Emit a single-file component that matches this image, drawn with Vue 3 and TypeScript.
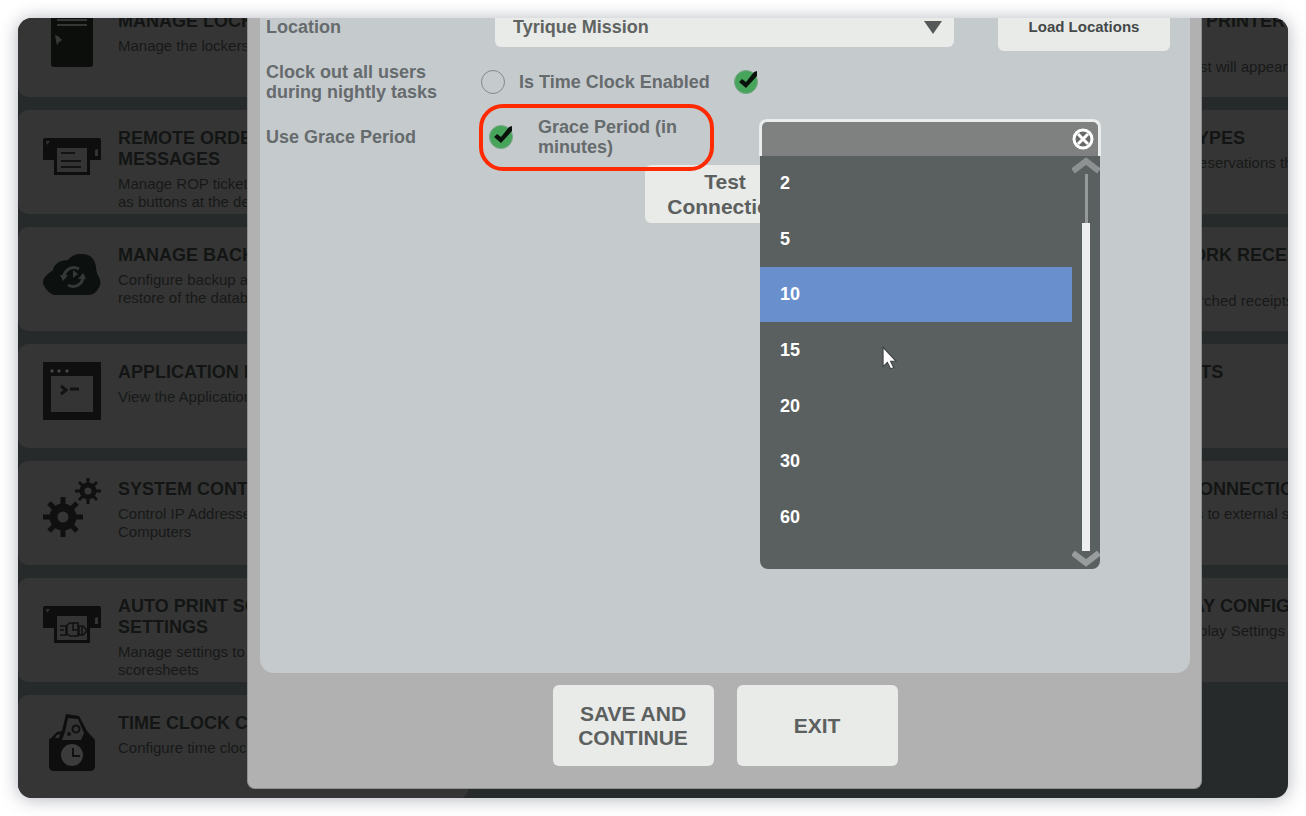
<script setup lang="ts">
import { ref } from 'vue'

type IconName = 'locker' | 'printer' | 'cloud' | 'terminal' | 'gears' | 'scores' | 'clock'

interface Tile {
  title: string
  text: string
  icon?: IconName
}

const leftTiles: Tile[] = [
  { title: 'MANAGE LOCKERS', text: 'Manage the lockers', icon: 'locker' },
  { title: 'REMOTE ORDER\nMESSAGES', text: 'Manage ROP tickets that appear\nas buttons at the desk', icon: 'printer' },
  { title: 'MANAGE BACKUPS', text: 'Configure backup and\nrestore of the database', icon: 'cloud' },
  { title: 'APPLICATION LOGS', text: 'View the Application logs', icon: 'terminal' },
  { title: 'SYSTEM CONTROL', text: 'Control IP Addresses of\nComputers', icon: 'gears' },
  { title: 'AUTO PRINT SCORES\nSETTINGS', text: 'Manage settings to print\nscoresheets', icon: 'scores' },
  { title: 'TIME CLOCK CONFIG', text: 'Configure time clock', icon: 'clock' },
]

const rightTiles: Tile[] = [
  { title: 'REMOTE ORDER PRINTER\nMESSAGES', text: 'Configure where the list will appear' },
  { title: 'RESERVATION TYPES', text: 'Manage the types of reservations that' },
  { title: 'MANAGE NETWORK RECEIPTS\nPRINTING', text: 'Manage and print searched receipts' },
  { title: 'MANAGE LAYOUTS', text: 'Manage layouts' },
  { title: 'RESERVATION CONNECTIONS', text: 'Configure connections to external systems' },
  { title: 'KITCHEN DISPLAY CONFIG', text: 'Configure Kitchen Display Settings' },
]

const locations = ['Tyrique Mission']
const location = ref(locations[0])
const clockOutNightly = ref(false)
const timeClockEnabled = ref(true)
const useGrace = ref(true)
const search = ref('')
const minutes = [2, 5, 10, 15, 20, 30, 60]
const selected = ref(10)
</script>

<template>
  <div class="screen">
    <main class="board">
      <section class="column first">
        <article v-for="tile in leftTiles" :key="tile.title" class="tile">
          <svg class="icon" viewBox="0 0 60 60" aria-hidden="true">
            <g v-if="tile.icon === 'locker'">
              <rect x="9" y="-4" width="42" height="61" rx="3" fill="#0c0e0c" />
              <path d="M15 0h30M15 5h30M15 10h30M15 15h30" stroke="#353635" stroke-width="2" />
              <path d="M13 25l3 1 4 4-4 3-1 3z" fill="#353635" />
            </g>
            <g v-else-if="tile.icon === 'printer' || tile.icon === 'scores'">
              <path d="M3 11h54q2 0 2 2v20H48v15H12V33H1V13q0-2 2-2z" fill="#0e0e0e" />
              <path d="M15 21h30v24H15z" fill="#343434" />
              <path d="M53 23l3-1v7h-3z" fill="#343434" />
              <path d="M4 14h4l-3 4z" fill="#343434" />
              <path v-if="tile.icon === 'printer'" d="M19 26h14M19 34h20M19 40h20" stroke="#131313" stroke-width="2" />
              <g v-else fill="none" stroke="#101010" stroke-width="1.500">
                <path d="M18 31h6v9h-6M18 35h4M25 30l3-2h8v13h-8l-3-2zM31 28v7h4M37 31h4l3 3v3l-3 3h-4zM40 31v9" />
              </g>
            </g>
            <g v-else-if="tile.icon === 'cloud'">
              <path d="M12 51C6 49 1 42 1 38c0-5 6-9 10-12 1-6 7-10 15-10 3-4 8-6 12-6 10-1 15 5 16 13 0 4 1 7 3 10 1 3 2 5 1 8-2 6-6 10-12 10z" fill="#0c100e" />
              <path d="M22 35a10 10 0 0 1 15-10M41 31a10 10 0 0 1-15 10" fill="none" stroke="#353836" stroke-width="3" />
              <path d="M18 31h8l-5 6zM36 35h8l-3-6zM31 26v8l5-4" fill="#353836" />
            </g>
            <g v-else-if="tile.icon === 'terminal'">
              <rect x="1" y="1" width="58" height="58" fill="#0e0f0e" />
              <rect x="9" y="15" width="42" height="36" fill="#343434" />
              <path d="M8 10l2-2 2 2-2 2zM15 10l2-2 2 2-2 2zM23 10l2-2 2 2-2 2z" fill="#484948" />
              <path d="M19 25l5 4-5 4M28 28h9" fill="none" stroke="#121212" stroke-width="3" />
            </g>
            <g v-else-if="tile.icon === 'gears'" fill="none" stroke="#0f100f">
              <circle cx="21" cy="39" r="9.500" stroke-width="8" />
              <path d="M21 19v9M21 50v9M1 39h9M32 39h9M7 25l7 7M28 46l7 7M35 25l-7 7M14 46l-7 7" stroke-width="5" />
              <circle cx="46" cy="13" r="6" stroke-width="5" />
              <path d="M46 0v6M46 20v6M33 13h6M53 13h6M37 4l5 5M50 17l5 5M55 4l-5 5M42 17l-5 5" stroke-width="3" />
            </g>
            <g v-else>
              <path d="M9 26l6-6 5-1 4-17 13 2 8 15 8 9v26q0 5-5 5H12q-5 0-5-5V27z" fill="#0d0e0d" />
              <path d="M26 6l10 1 6 14-3 7H20l3-8z" fill="#343434" />
              <circle cx="34" cy="17" r="3.500" fill="none" stroke="#101110" stroke-width="2" />
              <circle cx="27" cy="22" r="2" fill="#101110" />
              <path d="M15 23l3-1-1 4h-4z" fill="#343434" />
              <circle cx="30" cy="43" r="11" fill="#3a3b3a" />
              <path d="M31 36v8h7" fill="none" stroke="#111" stroke-width="2" />
            </g>
          </svg>
          <div class="copy">
            <h2>{{ tile.title }}</h2>
            <p>{{ tile.text }}</p>
          </div>
        </article>
      </section>
      <section class="column last">
        <article v-for="tile in rightTiles" :key="tile.title" class="tile">
          <div class="icon"></div>
          <div class="copy">
            <h2>{{ tile.title }}</h2>
            <p>{{ tile.text }}</p>
          </div>
        </article>
      </section>

      <div class="overlay">
        <form class="modal" role="dialog" aria-label="Time clock settings" @submit.prevent>
          <div class="panel">
            <div class="row location">
              <label class="name" for="location">Location</label>
              <div class="select-wrap">
                <select id="location" v-model="location">
                  <option v-for="l in locations" :key="l">{{ l }}</option>
                </select>
                <svg class="arrow" viewBox="0 0 18 13" aria-hidden="true"><path d="M0 0h18L9 13z" fill="#555a58" /></svg>
              </div>
              <button type="button" class="btn load">Load Locations</button>
            </div>

            <div class="row">
              <label class="name" for="nightly">Clock out all users during nightly tasks</label>
              <span class="tick">
                <input id="nightly" v-model="clockOutNightly" type="checkbox" />
              </span>
              <label class="enabled" for="enabled">Is Time Clock Enabled</label>
              <span class="tick">
                <input id="enabled" v-model="timeClockEnabled" type="checkbox" />
                <svg v-if="timeClockEnabled" viewBox="0 0 24 24" aria-hidden="true"><path d="M5 12l3-3 4 3 8-10 3-1v5L12 18z" fill="#0a120c" /></svg>
              </span>
            </div>

            <div class="row grace">
              <label class="name" for="grace">Use Grace Period</label>
              <div class="grace-group">
                <span class="tick">
                  <input id="grace" v-model="useGrace" type="checkbox" />
                  <svg v-if="useGrace" viewBox="0 0 24 24" aria-hidden="true"><path d="M5 12l3-3 4 3 8-10 3-1v5L12 18z" fill="#0a120c" /></svg>
                </span>
                <label class="period" for="minutes">Grace Period (in minutes)</label>
                <span class="marker"></span>
              </div>
              <div class="combo">
                <div class="combo-head">
                  <input id="minutes" v-model="search" type="text" autocomplete="off" />
                  <button type="button" aria-label="Clear" @click="search = ''">
                    <svg viewBox="0 0 22 22" aria-hidden="true">
                      <circle cx="11" cy="11" r="9" fill="#686a6a" stroke="#fff" stroke-width="3" />
                      <path d="M6 6l10 10M16 6L6 16" stroke="#fff" stroke-width="3" />
                    </svg>
                  </button>
                </div>
                <div class="menu">
                  <ul role="listbox" aria-label="Minutes">
                    <li v-for="m in minutes" :key="m" role="option" :aria-selected="m === selected" :class="{ on: m === selected }" @click="selected = m">{{ m }}</li>
                  </ul>
                  <div class="scroll">
                    <button type="button" aria-label="Scroll up">
                      <svg viewBox="0 0 28 18" aria-hidden="true"><path d="M1 15L14 5l13 10" fill="none" stroke="#8e9192" stroke-width="6" /></svg>
                    </button>
                    <div class="track"><div class="thumb"></div></div>
                    <button type="button" aria-label="Scroll down">
                      <svg viewBox="0 0 28 18" aria-hidden="true"><path d="M1 2l13 10L27 2" fill="none" stroke="#999c9c" stroke-width="6" /></svg>
                    </button>
                  </div>
                  <svg class="pointer" viewBox="0 0 14 22" aria-hidden="true">
                    <path d="M1 1v18l4-4 3 6 3-1-3-6h5z" fill="#fff" stroke="#3c4040" stroke-width="1" />
                  </svg>
                </div>
              </div>
            </div>

            <button type="button" class="btn test">Test Connection</button>
          </div>
          <div class="actions">
            <button type="submit" class="btn">SAVE AND CONTINUE</button>
            <button type="button" class="btn">EXIT</button>
          </div>
        </form>
      </div>
    </main>
  </div>
</template>

<style>
body {
  margin: 0;
  background: #fff;
}
</style>

<style scoped>
* {
  box-sizing: border-box;
}
.screen {
  min-height: 100vh;
  padding: 18px;
  display: flex;
  font-family: "Liberation Sans", Arial, sans-serif;
}
.board {
  position: relative;
  flex: 1;
  min-width: 0;
  height: calc(100vh - 36px);
  overflow: hidden;
  border-radius: 14px;
  background: #262a2a;
  box-shadow: 0 1px 18px rgba(60, 64, 84, 0.4);
  display: grid;
  grid-template-columns: repeat(3, minmax(450px, 1fr));
  column-gap: 18px;
  align-items: start;
}
.column {
  display: flex;
  flex-direction: column;
  gap: 13px;
  margin-top: -25px;
}
.last {
  grid-column: 3;
}
.tile {
  height: 104px;
  padding: 17px 8px 0 24px;
  display: flex;
  gap: 16px;
  border-radius: 10px;
  background: #353535;
}
.icon {
  flex: none;
  width: 60px;
  height: 60px;
}
.copy {
  padding-top: 1px;
  white-space: pre;
}
h2 {
  margin: 0 0 5px;
  font-size: 18px;
  line-height: 21px;
  font-weight: 700;
  color: #131514;
}
p {
  margin: 0;
  font-size: 15px;
  line-height: 18px;
  color: #171918;
}
.overlay {
  position: absolute;
  inset: 0;
  display: flex;
  padding: 0 86px 9px 229px;
}
.modal {
  flex: 1;
  min-width: 0;
  display: flex;
  flex-direction: column;
  padding: 0 11px 0 12px;
  border: 1px solid #8f9090;
  border-top: 0;
  border-radius: 0 0 8px 8px;
  background: #b1b1b1;
}
.panel {
  flex: 1;
  padding: 0 20px 0 6px;
  border-radius: 0 0 14px 14px;
  background: #c5cacd;
  font-size: 18px;
  line-height: 20px;
  font-weight: 700;
  color: #666b6e;
}
.row {
  display: flex;
  align-items: center;
  height: 40px;
  margin-top: 11px;
}
.row.location {
  height: 48px;
  margin-top: -15px;
}
.row.grace {
  margin-top: 15px;
}
.name {
  flex: none;
  width: 215px;
  padding-right: 32px;
}
.select-wrap {
  position: relative;
  flex: 1;
  margin: 0 44px 0 14px;
}
select {
  display: block;
  width: 100%;
  height: 40px;
  padding: 0 18px;
  border: 0;
  border-radius: 6px;
  appearance: none;
  background: #e9ebe9;
  font: inherit;
  color: #5f6462;
}
.arrow {
  position: absolute;
  right: 12px;
  top: 14px;
  width: 18px;
  height: 13px;
  pointer-events: none;
}
.btn {
  border: 0;
  border-radius: 6px;
  padding: 0;
  background: #e9ebe9;
  font-family: inherit;
  font-size: 21px;
  line-height: 24px;
  font-weight: 700;
  color: #5c605e;
}
.btn.load {
  width: 172px;
  height: 48px;
  font-size: 15px;
  color: #444948;
}
.btn.test {
  display: block;
  width: 160px;
  height: 58px;
  margin: 8px 0 0 379px;
  padding: 0 20px;
  line-height: 25px;
}
.tick {
  position: relative;
  flex: none;
  display: block;
  width: 24px;
  height: 24px;
}
.tick input {
  appearance: none;
  display: block;
  width: 24px;
  height: 24px;
  margin: 0;
  border: 1px solid #85898b;
  border-radius: 50%;
}
.tick input:checked {
  background: #46a55b;
  border-color: #7ba586;
}
.tick svg {
  position: absolute;
  inset: 0;
  pointer-events: none;
}
.enabled {
  margin: 0 24px 0 14px;
}
.grace-group {
  position: relative;
  flex: none;
  width: 278px;
  display: flex;
  align-items: center;
  padding-left: 8px;
}
.period {
  width: 166px;
  margin-left: 25px;
}
.marker {
  position: absolute;
  left: -2px;
  top: -13px;
  width: 235px;
  height: 67px;
  border: 4px solid #ff2a00;
  border-radius: 24px;
  pointer-events: none;
}
.combo {
  position: relative;
  width: 342px;
}
.combo-head {
  display: flex;
  align-items: center;
  height: 37px;
  padding-right: 4px;
  border: 3px solid #e9edee;
  border-bottom: 0;
  border-radius: 8px 8px 0 0;
  background: #7f8180;
}
.combo-head input {
  flex: 1;
  min-width: 0;
  height: 30px;
  padding: 0 16px;
  border: 0;
  outline: 0;
  background: none;
  font: inherit;
  color: #fff;
}
.combo-head button,
.scroll button {
  display: block;
  padding: 0;
  border: 0;
  background: none;
}
.combo-head svg {
  display: block;
  width: 22px;
  height: 22px;
}
.menu {
  position: absolute;
  z-index: 2;
  top: 100%;
  left: 1px;
  right: 1px;
  height: 413px;
  display: flex;
  overflow: hidden;
  border-radius: 0 0 8px 8px;
  background: #5a5f5f;
}
ul {
  flex: 1;
  height: 389px;
  margin: 0;
  padding: 0;
  list-style: none;
  display: flex;
  flex-direction: column;
}
li {
  flex: 1;
  display: flex;
  align-items: center;
  padding-left: 20px;
  color: #fff;
}
li.on {
  background: #6990cc;
}
.scroll {
  width: 28px;
  display: flex;
  flex-direction: column;
}
.scroll svg {
  display: block;
  width: 28px;
  height: 18px;
}
.track {
  flex: 1;
  display: flex;
  flex-direction: column;
  justify-content: flex-end;
  align-items: center;
  background: linear-gradient(#96999a, #96999a) center / 3px 100% no-repeat;
}
.thumb {
  width: 8px;
  height: 87%;
  background: #eceeef;
}
.pointer {
  position: absolute;
  left: 122px;
  top: 190px;
  width: 15px;
  height: 24px;
}
.actions {
  display: flex;
  justify-content: center;
  gap: 23px;
  padding: 12px 0 22px;
}
.actions .btn {
  width: 161px;
  height: 81px;
  padding: 0 20px;
}
</style>
